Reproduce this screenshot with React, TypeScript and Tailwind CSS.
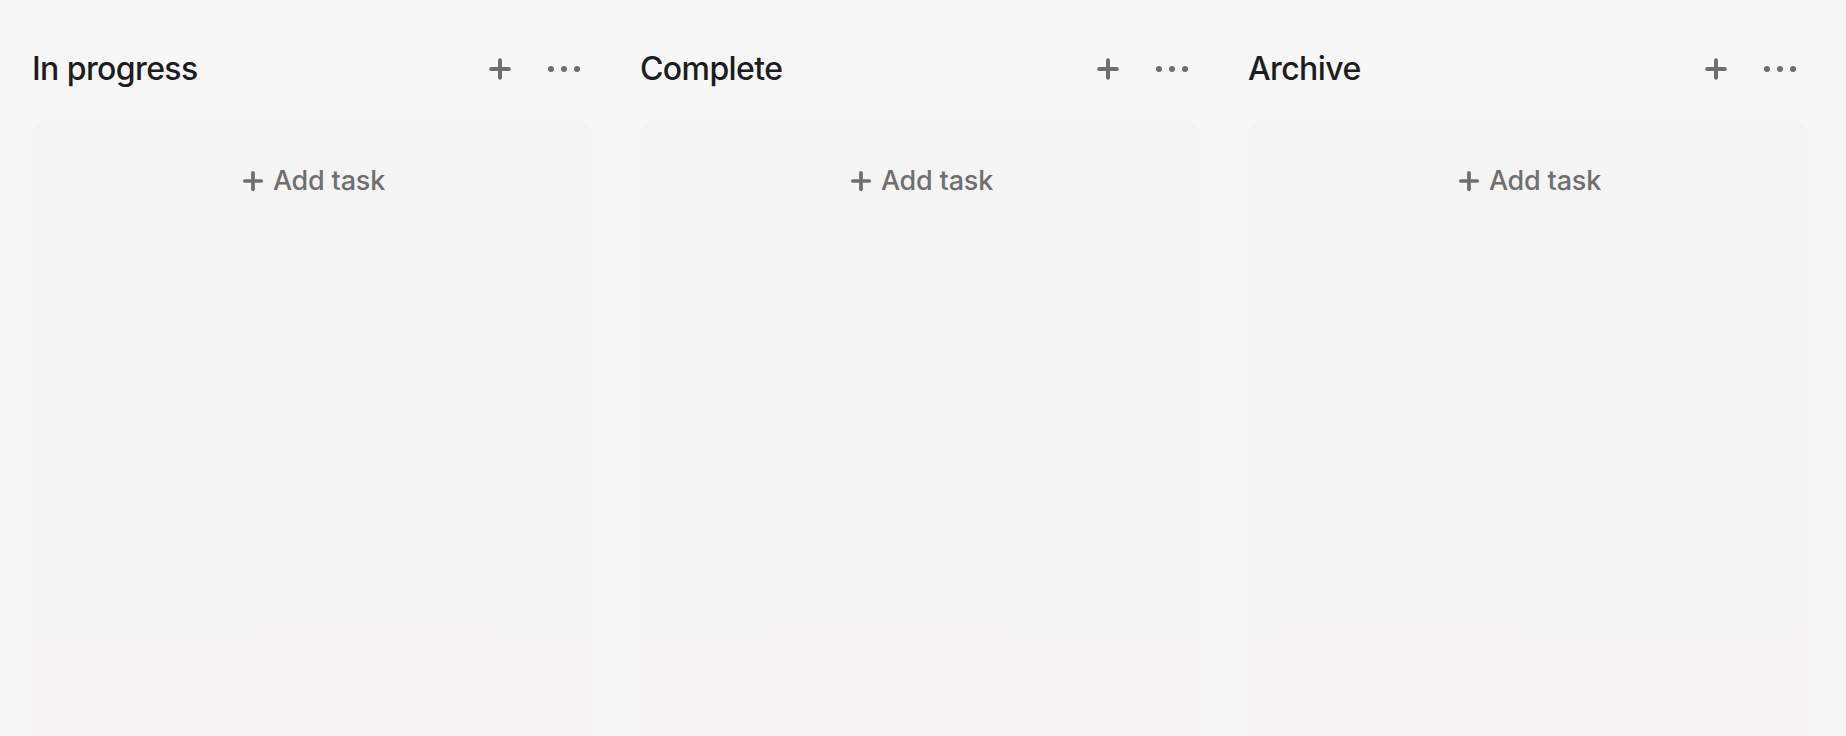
import { Plus } from 'lucide-react';

const columns = ['In progress', 'Complete', 'Archive'];

function DotsIcon() {
  return (
    <svg width="34" height="8" viewBox="0 0 34 8" fill="currentColor">
      <circle cx="4" cy="4" r="3" />
      <circle cx="17" cy="4" r="3" />
      <circle cx="30" cy="4" r="3" />
    </svg>
  );
}

function Column({ title }: { title: string }) {
  return (
    <div className="w-[560px] shrink-0 flex flex-col">
      <div className="h-10 flex items-center justify-between pr-[6px]">
        <h2 className="text-[32px] leading-10 font-medium tracking-[-0.6px] text-[#1d1d1f]">
          {title}
        </h2>
        <div className="flex items-center gap-[22px] text-[#6e6e6e]">
          <button className="w-10 h-10 flex items-center justify-center">
            <Plus className="w-[30px] h-[30px]" strokeWidth={3.2} />
          </button>
          <button className="w-11 h-10 flex items-center justify-center">
            <DotsIcon />
          </button>
        </div>
      </div>

      <div className="mt-[31px] flex-1 rounded-2xl bg-gradient-to-b from-[#f4f4f4] to-[#f6f4f5] min-h-[640px]">
        <button className="w-full pt-[45px] flex items-center justify-center gap-[6px] text-[#6f6f6f]">
          <Plus className="w-[28px] h-[28px]" strokeWidth={3.2} />
          <span className="text-[27px] leading-8 font-medium tracking-[-0.2px]">
            Add task
          </span>
        </button>
      </div>
    </div>
  );
}

export default function App() {
  return (
    <div
      className="w-full h-[736px] overflow-hidden bg-[#f7f7f7] px-8 pt-[49px] flex gap-12"
      style={{ fontFamily: 'Inter, "Noto Sans", sans-serif' }}
    >
      {columns.map((c) => (
        <Column key={c} title={c} />
      ))}
    </div>
  );
}
